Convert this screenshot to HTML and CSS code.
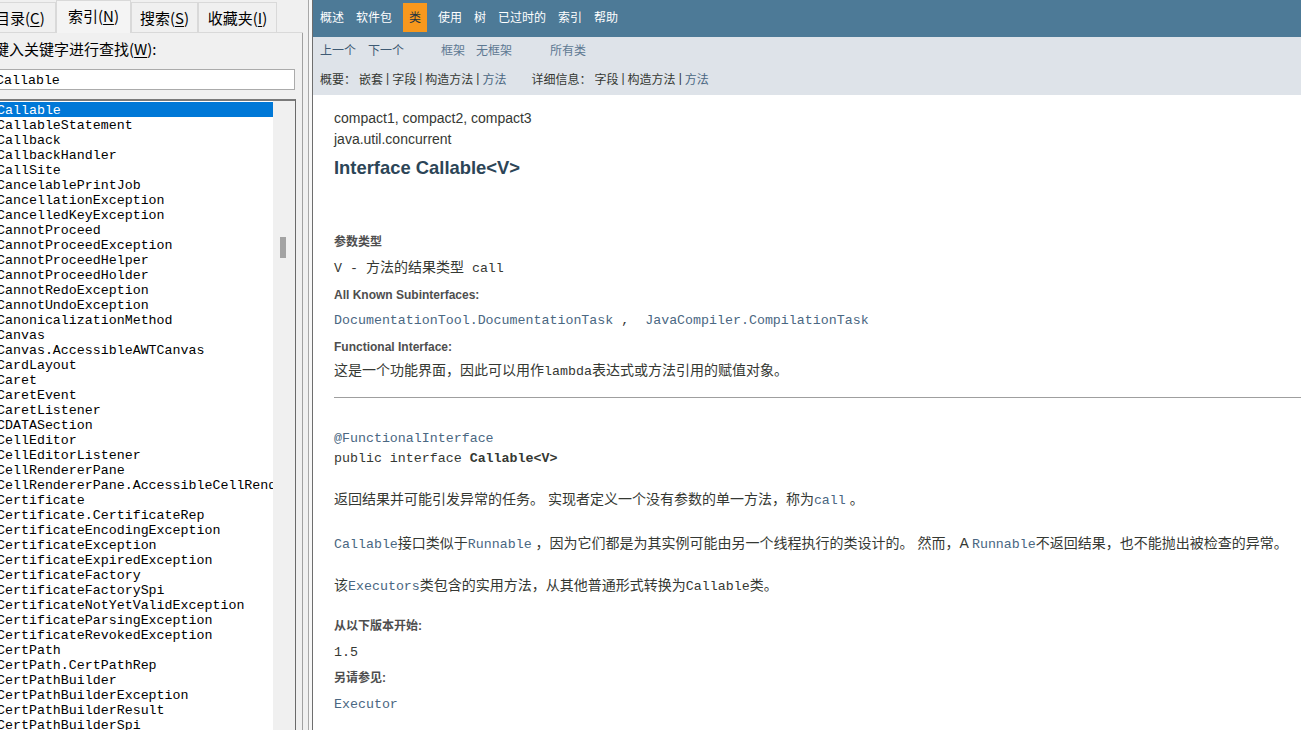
FILE: index.html
```html
<!DOCTYPE html>
<html lang="zh-CN">
<head>
<meta charset="utf-8">
<title>Interface Callable&lt;V&gt;</title>
<link rel="stylesheet" href="styles.css">
</head>
<body>
<div class="app">
  <aside class="left">
    <div class="lp">
      <div class="tabs">
        <div class="tab tab-c">目录(<u>C</u>)</div>
        <div class="tab tab-n sel">索引(<u>N</u>)</div>
        <div class="tab tab-s">搜索(<u>S</u>)</div>
        <div class="tab tab-i">收藏夹(<u>I</u>)</div>
        <div class="tab-fill"></div>
      </div>
      <div class="panel">
        <div class="label">键入关键字进行查找(<u>W</u>):</div>
        <div class="input">Callable</div>
        <div class="listbox">
          <ul class="list">
            <li class="hl">Callable</li>
            <li>CallableStatement</li>
            <li>Callback</li>
            <li>CallbackHandler</li>
            <li>CallSite</li>
            <li>CancelablePrintJob</li>
            <li>CancellationException</li>
            <li>CancelledKeyException</li>
            <li>CannotProceed</li>
            <li>CannotProceedException</li>
            <li>CannotProceedHelper</li>
            <li>CannotProceedHolder</li>
            <li>CannotRedoException</li>
            <li>CannotUndoException</li>
            <li>CanonicalizationMethod</li>
            <li>Canvas</li>
            <li>Canvas.AccessibleAWTCanvas</li>
            <li>CardLayout</li>
            <li>Caret</li>
            <li>CaretEvent</li>
            <li>CaretListener</li>
            <li>CDATASection</li>
            <li>CellEditor</li>
            <li>CellEditorListener</li>
            <li>CellRendererPane</li>
            <li>CellRendererPane.AccessibleCellRenderer</li>
            <li>Certificate</li>
            <li>Certificate.CertificateRep</li>
            <li>CertificateEncodingException</li>
            <li>CertificateException</li>
            <li>CertificateExpiredException</li>
            <li>CertificateFactory</li>
            <li>CertificateFactorySpi</li>
            <li>CertificateNotYetValidException</li>
            <li>CertificateParsingException</li>
            <li>CertificateRevokedException</li>
            <li>CertPath</li>
            <li>CertPath.CertPathRep</li>
            <li>CertPathBuilder</li>
            <li>CertPathBuilderException</li>
            <li>CertPathBuilderResult</li>
            <li>CertPathBuilderSpi</li>
            <li>CertPathChecker</li>
          </ul>
          <div class="vscroll"><div class="thumb"></div></div>
        </div>
      </div>
    </div>
    <div class="splitter"></div>
  </aside>

  <main class="doc">
    <nav class="topnav">
      <ul class="navlist">
        <li>概述</li>
        <li>软件包</li>
        <li class="active">类</li>
        <li>使用</li>
        <li>树</li>
        <li>已过时的</li>
        <li>索引</li>
        <li>帮助</li>
      </ul>
    </nav>
    <div class="subnav">
      <div class="subrow1">
        <span class="plain sp-prev">上一个</span>
        <span class="plain sp-next">下一个</span>
        <span class="navlink sp-frames">框架</span>
        <span class="navlink sp-noframes">无框架</span>
        <span class="navlink">所有类</span>
      </div>
      <div class="subrow2">
        <span class="cap">概要：</span><span class="plain">嵌套</span><span class="sep">|</span><span class="plain">字段</span><span class="sep">|</span><span class="plain">构造方法</span><span class="sep">|</span><span class="navlink sp-end">方法</span><span class="cap">详细信息：</span><span class="plain">字段</span><span class="sep">|</span><span class="plain">构造方法</span><span class="sep">|</span><span class="navlink">方法</span>
      </div>
    </div>

    <div class="content">
      <div class="row profiles">compact1, compact2, compact3</div>
      <div class="row pkgname">java.util.concurrent</div>
      <h2 class="title">Interface Callable&lt;V&gt;</h2>

      <div class="dt dt-params">参数类型</div>
      <div class="row dd-params"><code>V - </code>方法的结果类型<code> call</code></div>

      <div class="dt dt-sub">All Known Subinterfaces:</div>
      <div class="row dd-sub"><code><span class="lnk">DocumentationTool.DocumentationTask</span> ,&nbsp; <span class="lnk">JavaCompiler.CompilationTask</span></code></div>

      <div class="dt dt-func">Functional Interface:</div>
      <div class="row dd-func">这是一个功能界面，因此可以用作<code>lambda</code>表达式或方法引用的赋值对象。</div>

      <hr class="rule">

      <pre class="sig"><span class="lnk">@FunctionalInterface</span>
public interface <b>Callable&lt;V&gt;</b></pre>

      <p class="row p1">返回结果并可能引发异常的任务。 实现者定义一个没有参数的单一方法，称为<code class="lnk">call</code> 。</p>
      <p class="row p2"><code class="lnk">Callable</code>接口类似于<code class="lnk">Runnable</code> ，因为它们都是为其实例可能由另一个线程执行的类设计的。 然而，A <code class="lnk">Runnable</code>不返回结果，也不能抛出被检查的异常。</p>
      <p class="row p3">该<code class="lnk">Executors</code>类包含的实用方法，从其他普通形式转换为<code>Callable</code>类。</p>

      <div class="dt dt-since">从以下版本开始:</div>
      <div class="row dd-since"><code>1.5</code></div>
      <div class="dt dt-see">另请参见:</div>
      <div class="row dd-see"><code class="lnk">Executor</code></div>
    </div>
  </main>
</div>
</body>
</html>
```

FILE: styles.css
```css
* {
  box-sizing: border-box;
  margin: 0;
  padding: 0;
}

html, body {
  width: 1301px;
  height: 730px;
  overflow: hidden;
  background: #ffffff;
}

body {
  font-family: "Liberation Sans", "Noto Sans CJK SC", sans-serif;
  color: #353833;
}

.app {
  display: flex;
  height: 730px;
}

/* ---------- left help pane ---------- */
.left {
  width: 313px;
  flex: none;
  display: flex;
  background: #f0f0f0;
  overflow: hidden;
}

.lp {
  width: 309px;
  margin-left: -6px;
  flex: none;
  display: flex;
  flex-direction: column;
  font-family: "Noto Sans CJK SC", sans-serif;
  font-size: 15px;
  color: #000;
}

.tabs {
  height: 33px;
  display: flex;
  align-items: flex-end;
  flex: none;
}

.tab {
  height: 31px;
  border: 1px solid #d9d9d9;
  background: #f0f0f0;
  display: flex;
  align-items: center;
  justify-content: center;
  line-height: 20px;
  white-space: nowrap;
  padding-top: 1px;
}

.tab u {
  text-decoration: underline;
  text-underline-offset: 2px;
}

.tab-c { width: 62px; justify-content: flex-start; padding-left: 1px; border-left: none; }
.tab-n { width: 75px; }
.tab-s { width: 67px; }
.tab-i { width: 79px; }

.tab.sel {
  height: 33px;
  border-bottom: none;
  background: #f4f4f4;
  padding-top: 0;
  padding-bottom: 3px;
}

.tab-fill {
  flex: 1;
  height: 1px;
  background: #d9d9d9;
}

.panel {
  flex: 1;
  display: flex;
  flex-direction: column;
  border-right: 1px solid #a0a0a0;
  background: #f0f0f0;
  min-height: 0;
}

.label {
  margin-top: 6px;
  line-height: 20px;
  white-space: nowrap;
}

.label u {
  text-underline-offset: 2px;
}

.input {
  margin-top: 10px;
  width: 301px;
  height: 21px;
  border: 1px solid #ababab;
  background: #ffffff;
  font-family: "Liberation Mono", monospace;
  font-size: 13.3px;
  line-height: 19px;
  padding: 1px 0 0 1px;
  color: #000;
}

.listbox {
  margin-top: 9px;
  width: 302px;
  flex: 1;
  display: flex;
  border-top: 2px solid #7a7a7a;
  border-left: 1px solid #7a7a7a;
  border-right: 1px solid #6a6a6a;
  min-height: 0;
}

.list {
  width: 278px;
  flex: none;
  list-style: none;
  background: #ffffff;
  overflow: hidden;
  font-family: "Liberation Mono", monospace;
  font-size: 13.3px;
  color: #000;
  padding-top: 1px;
}

.list li {
  height: 15px;
  line-height: 17px;
  padding-left: 2px;
  white-space: nowrap;
  overflow: hidden;
}

.list li.hl {
  background: #0078d7;
  color: #ffffff;
}

.vscroll {
  width: 22px;
  flex: none;
  background: #f0f0f0;
}

.thumb {
  width: 6px;
  height: 21px;
  margin: 136px 0 0 7px;
  background: #a3a3a3;
}

.splitter {
  width: 10px;
  flex: none;
  background: linear-gradient(to right,
    #f0f0f0 0, #f0f0f0 5px,
    #a8a8a8 5px, #a8a8a8 6px,
    #f7f7f7 6px, #f7f7f7 9px,
    #6e6e6e 9px, #6e6e6e 10px);
}

/* ---------- right doc pane ---------- */
.doc {
  flex: 1;
  min-width: 0;
  display: flex;
  flex-direction: column;
  background: #ffffff;
}

.topnav {
  height: 37px;
  flex: none;
  background: #4d7a97;
  padding-left: 1px;
}

.navlist {
  display: flex;
  list-style: none;
  font-family: "Noto Sans CJK SC", sans-serif;
  font-size: 12px;
  color: #ffffff;
}

.navlist li {
  margin-top: 3px;
  height: 29px;
  line-height: 28px;
  padding: 0 6px;
}

.navlist li.active {
  background: #f8981d;
  color: #253441;
  margin: 3px 5px 0;
}

.subnav {
  height: 58px;
  flex: none;
  background: #dee3e9;
  font-family: "Noto Sans CJK SC", sans-serif;
  font-size: 12px;
  padding-left: 7px;
}

.subrow1 {
  height: 26px;
  line-height: 26px;
  display: flex;
  white-space: nowrap;
}

.subrow2 {
  height: 32px;
  line-height: 31px;
  display: flex;
  white-space: nowrap;
}

.plain { color: #353833; }
.subrow1 .plain { color: #3e5a74; }
.navlink { color: #5d7892; }

.sp-prev { margin-right: 12px; }
.sp-next { margin-right: 37px; }
.sp-frames { margin-right: 11px; }
.sp-noframes { margin-right: 38px; }

.cap {
  color: #353833;
  margin-right: 3px;
}

.sep {
  font-family: "Liberation Sans", sans-serif;
  color: #353833;
  padding: 0 3px;
}

.subrow2 .navlink { color: #4a6782; }
.sp-end { margin-right: 25px; }

/* ---------- content ---------- */
.content {
  flex: 1;
  display: flex;
  flex-direction: column;
  padding-left: 21px;
  font-size: 14px;
  color: #353833;
  white-space: nowrap;
}

code, pre {
  font-family: "Liberation Mono", monospace;
  font-size: 13.3px;
}

code {
  line-height: 1;
}

.lnk { color: #4a6782; }

.row {
  flex: none;
  height: 20px;
  line-height: 20px;
  overflow: visible;
}

.profiles { margin-top: 13px; }
.pkgname { margin-top: 1px; }

.title {
  flex: none;
  margin-top: 7px;
  height: 24px;
  line-height: 24px;
  font-size: 18.4px;
  font-weight: bold;
  color: #2c4557;
}

.dt {
  flex: none;
  height: 16px;
  font-size: 12px;
  font-weight: bold;
  line-height: 16px;
  color: #4e4e4e;
}

.dt-params { margin-top: 54px; }
.dd-params { margin-top: 7px; }
.dt-sub { margin-top: 10px; }
.dd-sub { margin-top: 6px; }
.dt-func { margin-top: 10px; }
.dd-func { margin-top: 5px; }

.rule {
  flex: none;
  margin-top: 17px;
  border: none;
  height: 1px;
  background: #9f9f9f;
}

.sig {
  flex: none;
  margin-top: 31px;
  height: 40px;
  line-height: 20px;
  color: #353833;
}

.p1 { margin-top: 20px; }
.p2 { margin-top: 24px; }
.p3 { margin-top: 22px; }

.dt-since { margin-top: 23px; }
.dd-since { margin-top: 7px; }
.dt-see { margin-top: 9px; }
.dd-see { margin-top: 7px; }
```
